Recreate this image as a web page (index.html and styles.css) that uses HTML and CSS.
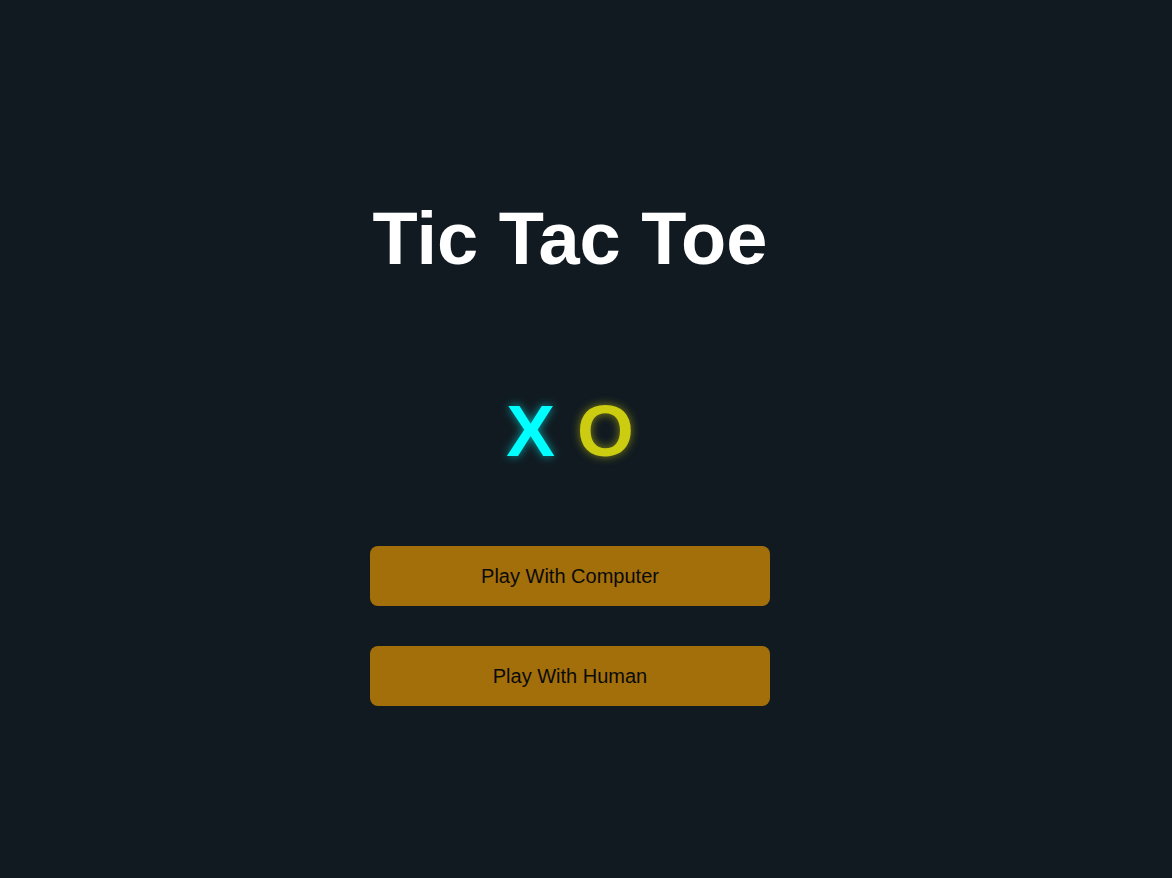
FILE: index.html
```html
<!DOCTYPE html>
<html lang="en">
<head>
<meta charset="utf-8">
<title>Tic Tac Toe</title>
<link rel="stylesheet" href="styles.css">
</head>
<body>
<main class="home">
  <h1 class="title">Tic Tac Toe</h1>
  <div class="logo"><span class="mark-x">X</span><span class="mark-o">O</span></div>
  <div class="actions">
    <button class="btn">Play With Computer</button>
    <button class="btn">Play With Human</button>
  </div>
</main>
</body>
</html>
```
FILE: styles.css
```css
html, body {
  margin: 0;
  padding: 0;
  background: #111a21;
  font-family: "Liberation Sans", Arial, sans-serif;
}
.home {
  min-height: 100vh;
  display: flex;
  flex-direction: column;
  align-items: center;
  padding: 196px 32px 0 0;
  box-sizing: border-box;
}
.title {
  margin: 0;
  color: #ffffff;
  font-size: 74px;
  font-weight: bold;
  line-height: normal;
}
.logo {
  margin-top: 108px;
  display: flex;
  gap: 22px;
  font-size: 73px;
  font-weight: bold;
  line-height: normal;
}
.mark-x {
  color: #00ffff;
  text-shadow: 0 0 10px rgba(0, 255, 255, 0.6);
}
.mark-o {
  color: #cccc11;
  text-shadow: 0 0 10px rgba(204, 204, 17, 0.6);
}
.actions {
  margin-top: 74px;
  display: flex;
  flex-direction: column;
  gap: 40px;
}
.btn {
  width: 400px;
  height: 60px;
  border: none;
  border-radius: 8px;
  background: #a36f0b;
  color: #0a0a0a;
  font-family: "Liberation Sans", Arial, sans-serif;
  font-size: 20px;
  cursor: pointer;
}
```
